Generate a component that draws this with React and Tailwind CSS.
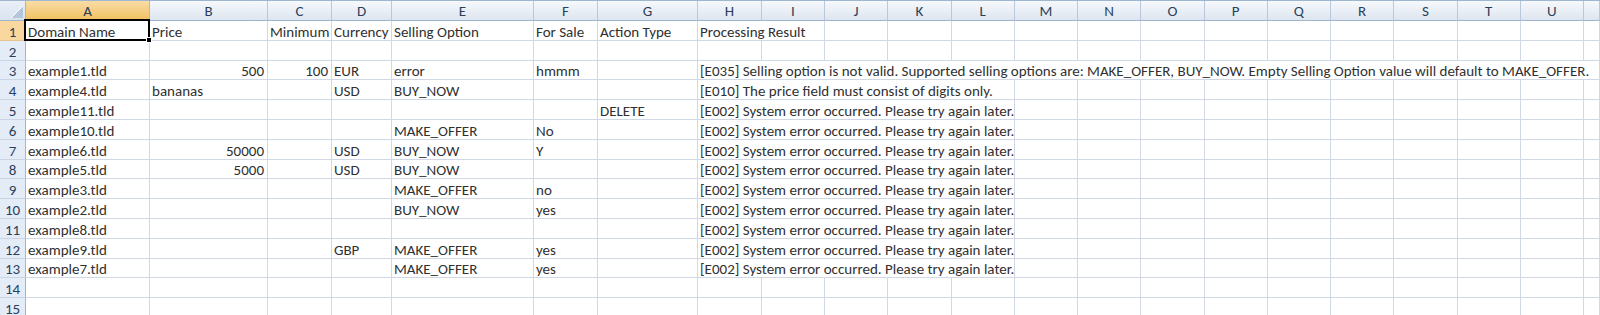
import React from "react";

const COLS = ["A","B","C","D","E","F","G","H","I","J","K","L","M","N","O","P","Q","R","S","T","U",""];

const E002 = "[E002] System error occurred. Please try again later.";
const rows = [
  { A: "Domain Name", B: "Price", C: "Minimum", D: "Currency", E: "Selling Option", F: "For Sale", G: "Action Type", H: "Processing Result", span: 2 },
  {},
  { A: "example1.tld", B: "500", C: "100", D: "EUR", E: "error", F: "hmmm", H: "[E035] Selling option is not valid. Supported selling options are: MAKE_OFFER, BUY_NOW. Empty Selling Option value will default to MAKE_OFFER.", span: 15, num: ["B","C"] },
  { A: "example4.tld", B: "bananas", D: "USD", E: "BUY_NOW", H: "[E010] The price field must consist of digits only.", span: 5 },
  { A: "example11.tld", G: "DELETE", H: E002, span: 5 },
  { A: "example10.tld", E: "MAKE_OFFER", F: "No", H: E002, span: 5 },
  { A: "example6.tld", B: "50000", D: "USD", E: "BUY_NOW", F: "Y", H: E002, span: 5, num: ["B"] },
  { A: "example5.tld", B: "5000", D: "USD", E: "BUY_NOW", H: E002, span: 5, num: ["B"] },
  { A: "example3.tld", E: "MAKE_OFFER", F: "no", H: E002, span: 5 },
  { A: "example2.tld", E: "BUY_NOW", F: "yes", H: E002, span: 5 },
  { A: "example8.tld", H: E002, span: 5 },
  { A: "example9.tld", D: "GBP", E: "MAKE_OFFER", F: "yes", H: E002, span: 5 },
  { A: "example7.tld", E: "MAKE_OFFER", F: "yes", H: E002, span: 5 },
  {},
  {},
];

const spanClass = { 1: "", 2: "col-span-2", 5: "col-span-5", 15: "col-span-15" };

function Cell({ children, right, className = "", extra }) {
  return (
    <div
      className={
        "relative flex items-end overflow-visible whitespace-nowrap border-r border-b border-[#d0d7e5] bg-white px-[2px] text-[15px] leading-[15px] text-[#303030] " +
        (right ? "justify-end pr-[3px] " : "") +
        className
      }
    >
      {children}
      {extra}
    </div>
  );
}

export default function App() {
  const cells = [];
  cells.push(
    <div
      key="corner"
      className="relative border-r border-b border-[#9eb6ce] bg-gradient-to-b from-[#eaf0f8] to-[#d9e3ef]"
    >
      <svg className="absolute right-[2px] bottom-[2px]" width="12" height="12" viewBox="0 0 12 12">
        <polygon points="12,0 12,12 0,12" fill="#b4c6dc" />
        <polyline points="12,0 0,12" stroke="#ffffff" strokeWidth="1" fill="none" />
      </svg>
    </div>
  );
  COLS.forEach((c, idx) => {
    const sel = c === "A";
    cells.push(
      <div
        key={"h" + idx}
        className={
          "flex items-center justify-center border-r border-b pt-[1px] text-[15px] leading-none " +
          (sel
            ? "border-r-[#e5b35a] border-b-[#c29a54] bg-gradient-to-b from-[#f9dca6] to-[#f1c15f] text-[#2a3f5a]"
            : "border-r-[#b9c8da] border-b-[#9eb6ce] bg-gradient-to-b from-[#f6f9fc] to-[#dde5ef] text-[#2a3f5a]")
        }
      >
        {c}
      </div>
    );
  });

  rows.forEach((r, i) => {
    const n = i + 1;
    const selRow = n === 1;
    cells.push(
      <div
        key={"r" + n}
        className={
          "flex items-end justify-center border-r border-b text-[15px] leading-[15px] text-[#2a3f5a] " +
          (selRow
            ? "border-r-[#c29a54] border-b-[#e5c38a] bg-[#f9d8a0]"
            : "border-r-[#9eb6ce] border-b-[#c9d5e4] bg-[#e4ecf7]")
        }
      >
        {n}
      </div>
    );
    ["A", "B", "C", "D", "E", "F", "G"].forEach((c) => {
      const right = r.num && r.num.includes(c);
      const extra =
        selRow && c === "A" ? (
          <div className="pointer-events-none absolute -top-[2px] -left-[2px] -right-[1px] -bottom-[1px] border-2 border-black">
            <div className="absolute -right-[4px] -bottom-[4px] h-[6px] w-[6px] border border-white bg-black" />
          </div>
        ) : null;
      cells.push(
        <Cell key={n + c} right={right} extra={extra} className={selRow && c === "A" ? "z-10" : ""}>
          {r[c] || ""}
        </Cell>
      );
    });
    if (r.H) {
      cells.push(
        <Cell key={n + "H"} className={spanClass[r.span]}>
          {r.H}
        </Cell>
      );
      const remaining = 15 - r.span;
      for (let k = 0; k < remaining; k++) cells.push(<Cell key={n + "x" + k} />);
    } else {
      for (let k = 0; k < 15; k++) cells.push(<Cell key={n + "x" + k} />);
    }
  });

  return (
    <div
      className="h-[315px] w-[1600px] overflow-hidden bg-white border-t border-[#9eb6ce]"
      style={{ fontFamily: "Carlito, Lato, 'Open Sans', sans-serif" }}
    >
      <div className="grid grid-cols-[26px_124px_118px_64px_60px_142px_64px_100px_64px_63px_repeat(12,63.25px)_1fr] grid-rows-[20px_repeat(15,19.8px)]">
        {cells}
      </div>
    </div>
  );
}
